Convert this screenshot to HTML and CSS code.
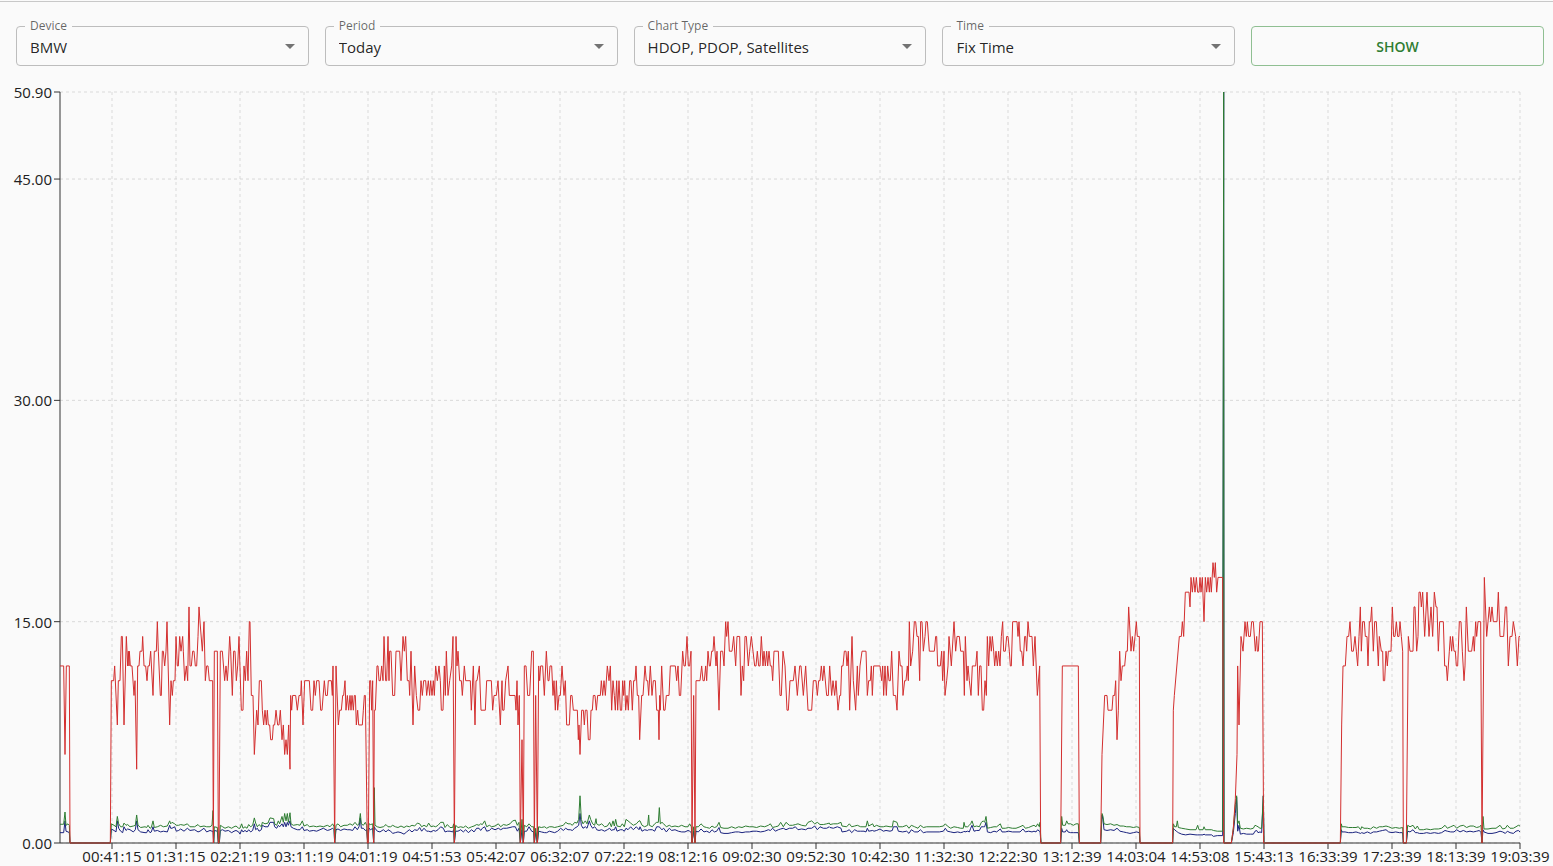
FILE: index.html
```
<!DOCTYPE html>
<html lang="en">
  <head>
    <meta charset="utf-8" />
    <meta name="viewport" content="width=device-width, initial-scale=1" />
    <title>Chart Report</title>
    <link rel="stylesheet" href="styles.css">
  </head>
  <body>
    <main class="page">
      <form class="filters">
        <div class="field">
          <select id="device" name="device"><option>BMW</option></select>
          <label for="device">Device</label>
          <svg class="arrow" viewBox="0 0 24 24" aria-hidden="true"><path d="M7 10l5 5 5-5z" /></svg>
        </div>
        <div class="field">
          <select id="period" name="period"><option>Today</option></select>
          <label for="period">Period</label>
          <svg class="arrow" viewBox="0 0 24 24" aria-hidden="true"><path d="M7 10l5 5 5-5z" /></svg>
        </div>
        <div class="field">
          <select id="type" name="type"><option>HDOP, PDOP, Satellites</option></select>
          <label for="type">Chart Type</label>
          <svg class="arrow" viewBox="0 0 24 24" aria-hidden="true"><path d="M7 10l5 5 5-5z" /></svg>
        </div>
        <div class="field">
          <select id="time" name="time"><option>Fix Time</option></select>
          <label for="time">Time</label>
          <svg class="arrow" viewBox="0 0 24 24" aria-hidden="true"><path d="M7 10l5 5 5-5z" /></svg>
        </div>
        <button type="button" class="show-btn">SHOW</button>
      </form>

      <div class="chart" id="chart"></div>
    </main>
    <script src="chart.js"></script>
  </body>
</html>
```
FILE: styles.css
```
* {
  box-sizing: border-box;
}

body {
  margin: 0;
  background-color: #fafafa;
  color: rgba(0, 0, 0, 0.87);
  font-family: "Open Sans", "Noto Sans", sans-serif;
  font-size: 15px;
}

.page {
  display: flex;
  flex-direction: column;
  height: 100vh;
  padding-top: 1px;
}

.filters {
  display: grid;
  grid-template-columns: repeat(5, 1fr);
  gap: 16px;
  padding: 24px 9px 16px 16px;
  border-top: 1px solid #c8c8c8;
}

.field {
  position: relative;
}

.field select {
  display: block;
  width: 100%;
  height: 40px;
  padding: 2px 32px 0 13px;
  border: 1px solid #bdbdbd;
  border-radius: 4px;
  background-color: transparent;
  color: inherit;
  font: inherit;
  appearance: none;
  cursor: pointer;
}

.field label {
  position: absolute;
  top: -8px;
  left: 9px;
  padding: 0 5px;
  background-color: #fafafa;
  color: rgba(0, 0, 0, 0.6);
  font-size: 12px;
  line-height: 16px;
}

.arrow {
  position: absolute;
  top: 8px;
  right: 7px;
  width: 24px;
  height: 24px;
  fill: rgba(0, 0, 0, 0.54);
  pointer-events: none;
}

.show-btn {
  height: 40px;
  border: 1px solid #8fbf92;
  border-radius: 4px;
  background-color: transparent;
  color: #2e7d32;
  font: inherit;
  font-size: 14px;
  font-weight: 600;
  cursor: pointer;
}

.chart {
  flex: 1;
  min-height: 0;
  overflow: hidden;
}

.chart svg {
  display: block;
}

.chart text {
  fill: #212121;
  font-size: 15px;
}

.grid line {
  stroke: #ccc;
  stroke-opacity: 0.7;
  stroke-dasharray: 3 3;
}

.axis line {
  stroke: #333;
}

.x-labels {
  text-anchor: middle;
}

.y-labels {
  text-anchor: end;
}

.series {
  fill: none;
  stroke-width: 1;
}

.hdop {
  stroke: #1a237e;
}

.pdop {
  stroke: #2e7d32;
}

.satellites {
  stroke: #d32f2f;
}
```
FILE: chart.js
```
// length of the time axis in samples
const SPAN = 4380
const MAX = 50.9

// each block starts at a sample offset, followed by "offset value" pairs
const satellites = [
  [-30, `30 12 41 12 45 6 49 12 58 12 60 0 181 0 184 11 191 11 194 12 202 8 205 11 210 11 214 14 217 14 222 8 229 14
    233 12 235 13 237 12 238 13 241 12 246 12 252 10 255 11 260 5 263 12 267 12 270 13 276 13 278 14 282 12 287 12
    291 11 294 12 298 12 302 13 309 10 313 13 319 13 322 15 325 13 331 10 334 10 337 13 340 13 344 12 348 13 351 15
    359 8 363 11 367 10 370 11 375 11 378 14 382 12 385 12 389 14 393 13 398 14 400 13 404 11 409 12 413 11 417 16
    420 12 424 12 428 13 432 13 436 12 440 12 444 14 447 16 450 15 457 13 462 15 466 11 470 12 474 12 478 11 488 11
    490 0 493 13 502 13 505 0 507 0 511 13 517 13 524 11 528 12 532 11 535 12 539 14 542 13 547 10 551 13 555 13
    559 11 563 12 567 14`],
  [540, `4 9 9 9 12 12 16 11 20 13 24 11 28 15 30 15 34 10 39 10 43 6 50 9 54 8 58 11 64 11 67 9 71 8 75 9 79 8 82 9
    85 8 89 8 92 7 97 7 100 8 104 8 108 9 113 8 117 8 121 9 126 7 130 8 134 6 138 7 142 6 146 8 150 5 152 10 155 9
    158 10 167 10 172 9 177 10 182 10 184 11 189 8 194 11 208 11 213 9 218 9 222 11 226 10 230 11 237 11 242 9 246 9
    253 11 257 10 262 10 265 11 274 11 277 10 279 12 284 0 288 12 295 8 299 9 304 9 308 10 311 10 315 11 318 9 322 10
    326 9 330 10 333 9 336 10 340 9 343 10 346 10 349 8 353 9 356 8 367 8 370 9 373 10 376 10 382 0 385 0 389 11
    392 11 395 9 398 11 401 0 403 9 406 9 411 12 414 12 417 11 421 11 425 12 429 11 432 14 437 11 440 11 444 14
    447 11 449 13 453 13 458 10 464 10 468 13 479 13 483 11 489 14 493 13 497 14 502 11 507 11 509 10 513 13 519 8
    524 12 529 10 534 9 539 9 543 11 547 10 551 11 557 11 560 10 565 11 569 10 572 11 576 10 580 11 583 10 587 12
    592 11 597 12 601 11 604 9 609 9 613 12 616 10 619 13 624 10`],
  [1110, `59 11 65 12 69 14 73 0 78 14 81 12 84 13 89 11 94 11 97 10 103 12 107 11 121 11 124 9 130 12 135 8 138 11
    141 11 148 12 153 9 166 9 170 11 184 11 188 9 192 10 199 10 204 11 211 8 216 11 218 9 222 9 227 11 234 12 238 10
    255 10 258 9 261 11 264 8 268 10 271 0 276 7 280 0 283 12 288 12 293 10 299 10 305 13 310 13 313 0 317 10 322 0
    326 12 329 11 332 12 338 12 343 10 349 13 354 11 357 11 360 12 365 12 369 10 372 11 376 9 379 11 383 9 387 10
    391 10 396 12 402 10 406 11 410 8 418 8 422 10 426 10 430 9 442 9 445 7 447 8 450 6 455 9 460 9 463 8 466 9
    471 9 475 7 480 7 483 9 487 9 490 10 495 10 499 9 503 10 511 10 514 11 518 10 522 11 526 10 532 12 537 11 541 12
    545 9 549 11 553 10 556 9 560 11 563 9 567 11 571 9 575 9 578 11 581 10 584 11 587 9 591 10 595 9 599 11 603 11
    607 9 611 11 615 11 618 12 622 10 626 10 629 7`],
  [1680, `65 10 69 10 75 12 79 11 83 11 86 10 91 12 96 10 100 11 106 11 110 9 115 9 117 7 119 10 121 9 125 12 131 9
    135 9 139 10 147 10 151 12 166 12 170 11 174 12 178 10 182 10 188 13 192 12 196 12 201 14 205 12 209 12 213 13
    216 0 221 10 225 0 228 11 240 11 245 12 249 11 253 11 257 12 260 11 264 13 268 12 271 12 275 13 279 13 282 14
    288 12 291 13 297 9 302 13 308 13 312 12 317 15 320 14 324 15 328 13 336 13 341 14 347 12 351 14 359 14 363 10
    367 12 371 11 375 14 379 14 385 12 389 13 394 14 399 13 404 12 408 12 412 13 416 12 420 12 424 14 429 12 432 13
    436 12 440 13 443 12 447 13 451 12 455 12 458 11 462 13 475 13 480 10 484 10 489 13 495 12 501 9 505 9 510 11
    520 11 525 12 532 10 539 12 543 12 550 10 557 12 564 9 575 9 580 11 588 11 592 10 596 11 600 11 604 12 608 11
    612 12 620 10 625 10 629 12`],
  [2250, `65 10 69 11 74 10 78 11 81 10 84 9 89 10 92 10 95 12 99 12 103 13 108 13 111 12 115 13 119 9 126 14 130 11
    137 9 142 12 145 10 150 12 156 13 168 13 172 10 176 11 181 11 184 12 187 10 191 12 210 12 215 11 218 12 221 10
    225 12 229 10 233 12 237 11 241 11 245 13 250 10 257 10 261 9 267 13 271 12 276 12 279 10 284 11 288 11 292 12
    295 11 298 15 302 12 308 13 313 15 317 15 321 14 325 14 329 11 332 15 336 15 340 13 345 14 348 15 352 15 358 13
    373 13 377 14 380 14 383 12 391 12 395 13 398 11 402 13 405 10 410 11 414 12 417 14 424 12 432 15 437 13 441 14
    448 14 452 13 460 13 463 10 466 14 471 11 474 12 478 11 483 10 487 12 497 12 501 13 505 10 509 12 513 12 517 9
    521 9 525 11 529 10`],
  [2760, `22 14 26 12 30 14 34 13 37 14 41 13 44 12 48 13 52 12 56 13 60 12 64 14 68 15 71 13 76 13 80 14 84 14 88 13
    91 12 94 12 98 15 111 15 114 14 117 15 121 13 125 13 129 12 134 14 137 14 140 13 144 15 148 14 156 14 160 12
    165 14 172 10 179 12 182 0 242 0 247 12 295 12 298 0 362 0 366 6 374 10 381 10 384 9 396 9 399 10 404 10 407 11
    411 7 415 9 419 13 423 11 427 12 434 12 438 13 442 13 446 16 453 13 457 14 461 13 465 14 469 15 472 14 478 14
    480 0`],
  [3300, `38 0 40 9 43 10 58 14 64 14 67 15 71 14 76 17 87 17 90 16 93 18 97 17 101 18 105 17 109 18 113 17 117 17
    120 18 123 17 127 18 132 15 136 18 140 17 144 18 148 17 151 18 154 17 159 19 163 18 166 19 170 17 174 18 188 18
    191 0 214 0 220 1 226 3 231 6 233 12 237 8 243 14 249 13 255 15 259 14 262 15 266 14 271 14 275 15 280 15 286 13
    290 14 292 13 295 13 300 15 307 15 311 0`],
  [3810, `31 0 35 8 39 12 46 12 51 14 56 14 60 15 65 13 70 13 75 14 79 13 83 12 87 14 91 16 94 13 98 15 103 15 106 14
    111 14 114 12 118 15 122 15 125 16 130 13 134 15 139 15 145 12 148 14 154 13 158 13 160 11 164 11 168 13 172 12
    175 13 183 13 187 16 191 14 195 14 199 15 203 14 207 14 210 15 214 14 218 13 220 0 229 0 235 14 240 13 249 13
    252 16 255 16 260 13 264 14 267 17 271 17 274 16 278 17 284 14 291 17 297 14 303 16 308 14 313 17 318 16 321 16
    325 13 329 15 340 15 344 12 349 12 352 11 358 13 361 14 365 13 368 14 372 13 376 13 379 12 383 12 388 15 393 15
    397 13 402 11 405 12 409 16 415 13 425 13 430 14 433 13 437 15 440 14 444 15 452 15 456 0 463 18 470 14 474 15
    478 16 482 15 486 16 490 15 501 15 505 17 510 14 521 14 526 16 530 16 535 12 540 14 546 14 550 15 557 14 562 12
    567 14 570 14`]
]

// "offset hdop pdop" triples
const dop = [
  [-30, `30 .7 1.27 41 .7 1.27 45 1.5 2.1 48 .8 1.2 54 .75 1.3 58 .7 1.2 60 0 0 181 0 0 184 .95 1.3 192 .85 1.2
    198 .75 1.1 202 1.5 1.8 206 1 1.3 212 .8 1.1 218 .7 1.1 222 1.1 1.35 228 .85 1.2 233 .95 1.25 240 .9 1.1
    250 .75 1.15 256 .9 1.2 260 1.5 1.9 264 .9 1.2 272 .75 1.05 285 .7 1.1 290 .7 1.05 294 .9 1.2 300 .7 1
    304 .75 1.05 309 1.1 1.5 313 .8 1.05 322 .85 1.1 332 .75 1.2 340 .8 1.1 352 .75 1.15 359 1.2 1.5 362 1 1.3
    366 1 1.4 374 1.1 1.3 379 .8 1.2 386 .85 1.2 392 .95 1.25 402 .8 1.2 412 1 1.3 420 .85 1.1 434 .9 1.1
    444 .75 1.25 450 .8 1.1 462 1 1.15 470 .75 1.1 480 .85 1.1 486 .8 1.2 489 .8 2.2 491 0 0 493 .85 1.1
    502 .8 1.05 505 0 0 508 0 0 511 .85 1.2 518 .9 1.1 525 .8 1 535 .85 1.1 545 .7 1 552 .8 1.1 558 .85 1.15 566 .75 1`],
  [540, `0 .6 1 5 .9 1.3 9 .75 1 15 .85 1.1 21 .75 1 26 .9 1.25 32 .75 1.1 38 .85 1.2 43 1.3 1.7 47 .9 1.35 52 1 1.1
    57 .8 1.25 64 .9 1.1 67 1.2 1.4 75 1.1 1.3 84 1.1 1.35 90 1.4 1.7 101 1.4 1.65 104 1.1 1.3 110 1 1.2 115 1.2 1.5
    119 1.1 1.3 126 1.3 1.8 130 1.1 1.4 134 1.4 2 138 1.1 1.5 142 1.4 2 145 1.2 1.4 150 1.5 2.05 153 1.1 1.3
    160 1 1.2 172 .9 1.25 180 .9 1.2 187 1.1 1.5 192 .85 1.15 202 .9 1.25 208 .8 1.1 220 .85 1.15 230 .8 1.1
    240 .9 1.15 250 1 1.1 262 .85 1.2 270 .9 1.1 278 1 1.3 282 .9 1.1 284 0 0 288 .9 1.2 294 .95 1.3 302 .85 1.1
    312 .95 1.2 322 .9 1.2 330 .9 1.3 338 .85 1.2 345 1.1 1.4 352 .9 1.2 357 1.1 1.3 361 1.7 2 364 1 1.3 370 1 1.2
    376 .85 1.4 380 .9 1.2 383 0 0 387 1 1.3 392 .9 1.25 398 1 1.3 401 0 0 403 1.1 3.75 405 1 1.2 412 .8 1.1
    420 .75 1.05 430 .9 1.1 438 .75 1.25 444 .9 1.1 452 .8 1.1 458 .65 1.2 466 .7 1.1 474 .75 1.05 483 .7 1.15
    492 .6 1.05 500 .75 1.15 508 .9 1.1 516 .75 1.2 524 .9 1.15 532 .85 1.35 539 1.05 1.3 545 .8 1.1 552 1 1.2
    560 .8 1.1 566 .8 1.35 573 .75 1.1 580 .85 1.15 587 .8 1.1 594 .9 1.2 602 1.1 1.4 610 1 1.4 615 .75 1.05 622 .8 1.25`],
  [1110, `60 .8 1.05 68 .75 1.05 71 .9 1.3 73 0 0 77 .8 1.2 84 .8 1.05 92 .9 1.1 100 .75 1.05 107 .9 1.15 115 .7 1
    125 .9 1.1 132 .75 1.15 140 1 1.25 147 1 1.2 152 .85 1.3 157 1 1.25 164 1.1 1.5 170 .8 1.1 178 .85 1.2 185 1 1.1
    195 .9 1.15 205 1 1.3 212 .9 1.1 220 1 1.25 230 1 1.2 240 1.05 1.3 248 1.1 1.5 256 1.1 1.55 262 .8 1.2 267 1 1.4
    271 0 0 276 .9 1.6 280 0 0 283 .8 1.2 290 .8 1.1 297 1.1 1.3 305 .8 1.1 311 .75 1.1 313 0 0 317 .7 1 322 0 0
    326 .8 1.1 334 .75 1.05 344 .7 1.1 350 .7 1 358 .8 1.1 366 .75 1.1 374 .7 1.05 383 .8 1.1 392 1 1.15 400 .85 1.2
    407 1 1.4 414 .9 1.3 421 .9 1.3 427 .85 1.2 434 1 1.4 441 1.1 1.35 446 1.2 1.6 450 2 3.2 454 1.2 1.6
    459 1 1.3 466 1.1 1.5 471 1 1.3 478 1.5 1.9 482 1.2 1.6 488 1 1.3 494 1.1 1.2 498 1 1.65 500 .9 1.3 507 .85 1.2
    515 .9 1.3 524 .8 1.1 532 .9 1.15 539 1 1.4 544 .85 1.1 549 .9 1.5 553 .9 1.15 557 1.1 1.6 561 .8 1.15
    571 .9 1.1 577 .9 1.3 583 .8 1.1 588 1 1.6 594 .9 1.5 602 1.1 1.35 610 .9 1.2 619 1.1 1.3 627 .9 1.5`],
  [1680, `60 1.1 1.5 66 .8 1.2 74 .9 1.1 83 .85 1.2 86 .9 1.9 88 .9 1.2 97 .9 1.1 104 .8 1.3 110 1.1 1.4 115 1.1 1.4
    118 1.1 2.4 121 1 1.3 126 .9 1.4 131 1 1.3 139 .75 1.1 148 1 1.2 155 .85 1.1 165 .9 1.15 175 .8 1.1 185 .75 1.2
    195 .75 1.1 204 .85 1.1 209 .8 1.3 214 .7 1.1 216 0 0 221 .8 1.1 225 0 0 228 .8 1.1 235 .75 1.1 243 .95 1.3
    252 .75 1.1 260 .8 1.05 269 .7 1 276 .9 1.15 283 .75 1.05 290 .8 1.1 297 1.05 1.4 302 .7 1.05 312 .65 1 324 .65 1
    335 .7 1.1 346 .75 1 356 .75 1.1 366 .7 1.05 377 .75 1.15 388 .75 1.1 399 .8 1.1 410 .8 1.05 422 .75 1.15
    434 .8 1.1 445 .9 1.2 451 .85 1.3 458 1 1.05 466 .8 1.1 475 .9 1.15 482 .95 1.4 490 1 1.1 498 .9 1.4 508 1 1.2
    518 1 1.2 526 1.1 1.25 534 .9 1.3 545 .95 1.2 557 .9 1.15 564 1 1.4 575 1 1.5 584 1.15 1.3 592 .9 1.4
    600 1.1 1.25 610 1 1.25 620 1 1.3 628 1.1 1.35`],
  [2250, `60 1.05 1.25 70 1 1.3 82 1.1 1.3 93 1 1.4 96 .75 1.15 110 .8 1.1 118 .9 1.3 125 .7 1.1 134 .9 1.15
    142 .8 1.2 152 .8 1.1 162 .8 1.1 168 .75 1.1 172 1 1.5 176 .8 1.15 188 .85 1.3 192 .8 1.1 200 .85 1.2 210 .95 1.1
    220 .8 1.1 228 .85 1.15 240 .8 1.1 247 .85 1.1 250 1.1 1.5 261 1.1 1.4 265 .8 1.1 278 .75 1.1 290 .8 1.2
    297 .65 1 304 .9 1.2 314 .75 1.1 324 .75 1 331 .9 1.2 340 .7 1.05 350 .75 1.1 360 .75 1.1 375 .75 1.1
    388 .75 1.1 400 .8 1.15 406 1 1.3 412 .8 1.15 422 .75 1 432 .7 1.1 443 .75 1.05 452 .7 1 460 .75 1 462 .8 1.4
    465 .75 1.1 473 .8 1.1 478 .75 1.2 482 1 1.3 486 1.2 1.5 492 .8 1.1 500 .85 1.15 508 .85 1.1 514 1.1 1.4
    520 1.1 1.5 524 1.1 1.4 528 1.4 1.8 532 .8 1.1`],
  [2760, `22 .75 1 32 .7 1.05 42 .8 1.1 50 .75 1.1 61 .95 1.3 66 .75 1 76 .75 1 86 .8 1.05 97 .75 1 108 .75 1
    120 .75 1.1 129 .95 1.2 136 .75 1 146 .8 1.05 156 .75 1.15 162 .8 1.2 168 .75 1.1 173 .9 1.3 178 .8 1.1
    180 .8 1.4 183 0 0 242 0 0 245 1 1.8 248 .75 1.2 256 .75 1.2 260 .9 1.5 264 .75 1.3 272 .7 1.3 280 .7 1.2
    288 .7 1.3 295 .7 1.3 298 0 0 362 0 0 366 1.9 2 369 1.6 1.8 372 .9 1.3 381 .85 1.25 392 .9 1.3 402 .85 1.2
    411 1 1.25 420 .8 1.15 430 .75 1.15 440 .7 1.1 450 .65 1.1 460 .7 1.05 470 .75 1.1 478 .7 1.05 480 0 0`],
  [3300, `38 0 0 40 1 1.3 44 .9 1.1 49 .8 1.1 52 .75 1.5 55 .7 1.05 65 .6 1 77 .55 .95 90 .6 .9 108 .55 .9 113 .55 1.2
    117 .55 .9 129 .55 .9 132 .6 1.1 136 .55 .9 155 .55 .9 160 .45 .85 172 .5 .8 188 .5 .8 191 50.9 50.9 192 0 0
    214 0 0 220 .7 1 226 2 2.6 230 3.1 3.2 233 .8 1.3 237 1.2 1.5 241 .6 1 250 .65 .95 260 .6 1 272 .6 .95 280 .6 1
    285 .8 1.2 290 .85 1.15 294 .7 1.1 300 .75 1 305 .7 1 310 3.2 3.2 312 0 0 541 0 0 544 .9 1.3`],
  [3810, `36 .75 1.1 45 .75 1.1 56 .7 1.05 67 .7 1.05 78 .75 1.05 85 .7 1.1 92 .65 .9 95 .7 1.1 102 .65 1 112 .75 1
    122 .65 .95 130 .75 1.1 140 .75 1 148 .8 1.1 158 .85 1.1 168 .9 1.15 176 .75 1.1 186 .7 1 197 .75 1.05 208 .7 1
    218 .7 1.05 220 0 0 229 0 0 233 .8 1.2 240 .75 1.1 249 .9 1.2 256 .7 .95 262 .7 1.15 268 .65 .9 280 .65 .9
    290 .7 .95 301 .65 .9 313 .7 .95 325 .65 .95 335 .7 1 345 .85 1.2 352 .8 1 362 .75 1.1 372 .75 1.2 380 .9 1
    390 .75 1.15 400 .85 1.2 410 .75 1.05 420 .8 1.15 430 .75 1.15 440 .8 1.05 448 .85 1.1 453 .7 1.2 456 0 0
    459 .9 1.8 462 .75 .95 474 .65 .95 486 .65 1 498 .7 1 510 .8 1.2 518 .75 .95 526 .65 1 532 .8 1.2 540 .7 1
    550 .65 1 558 .8 1.1 565 .85 1.2 570 .75 1.15`]
]

const times = ['00:41:15', '01:31:15', '02:21:19', '03:11:19', '04:01:19', '04:51:53', '05:42:07', '06:32:07',
  '07:22:19', '08:12:16', '09:02:30', '09:52:30', '10:42:30', '11:32:30', '12:22:30', '13:12:39', '14:03:04',
  '14:53:08', '15:43:13', '16:33:39', '17:23:39', '18:13:39', '19:03:39']
const yTicks = [0, 15, 30, 45, 50.9]

// turn the blocks into one flat list of rows
function unpack(blocks, size) {
  const rows = []
  for (const [start, text] of blocks) {
    const nums = text.trim().split(/\s+/).map(Number)
    for (let i = 0; i < nums.length; i += size) {
      rows.push([nums[i] + start, ...nums.slice(i + 1, i + size)])
    }
  }
  return rows
}

const satRows = unpack(satellites, 2)
const dopRows = unpack(dop, 3)

function drawChart() {
  const box = document.getElementById('chart')
  const width = box.clientWidth
  const height = box.clientHeight
  const left = 60
  const right = width - 33
  const top = 10
  const bottom = height - 23

  const x = s => left + s / SPAN * (right - left)
  const y = v => bottom - v / MAX * (bottom - top)
  const line = (x1, y1, x2, y2) => `<line x1="${x1}" y1="${y1}" x2="${x2}" y2="${y2}" />`
  const series = (name, rows, col) =>
    `<polyline class="series ${name}" points="${rows.map(r => x(r[0]).toFixed(2) + ',' + y(r[col]).toFixed(2)).join(' ')}" />`

  let grid = ''
  let axis = line(left, top, left, bottom) + line(left, bottom, right, bottom)
  let xLabels = ''
  let yLabels = ''

  times.forEach((time, i) => {
    const tx = x(156 + i * 192)
    grid += line(tx, top, tx, bottom)
    axis += line(tx, bottom, tx, bottom + 6)
    xLabels += `<text x="${tx}" y="${bottom + 19}">${time}</text>`
  })
  yTicks.forEach(v => {
    grid += line(left, y(v), right, y(v))
    axis += line(left - 6, y(v), left, y(v))
    yLabels += `<text x="${left - 8}" y="${y(v) + 6}">${v.toFixed(2)}</text>`
  })

  box.innerHTML = `<svg width="${width}" height="${height}">
    <g class="grid">${grid}</g>
    <g class="axis">${axis}</g>
    <g class="x-labels">${xLabels}</g>
    <g class="y-labels">${yLabels}</g>
    ${series('hdop', dopRows, 1)}
    ${series('pdop', dopRows, 2)}
    ${series('satellites', satRows, 1)}
  </svg>`
}

window.addEventListener('resize', drawChart)
drawChart()
```
